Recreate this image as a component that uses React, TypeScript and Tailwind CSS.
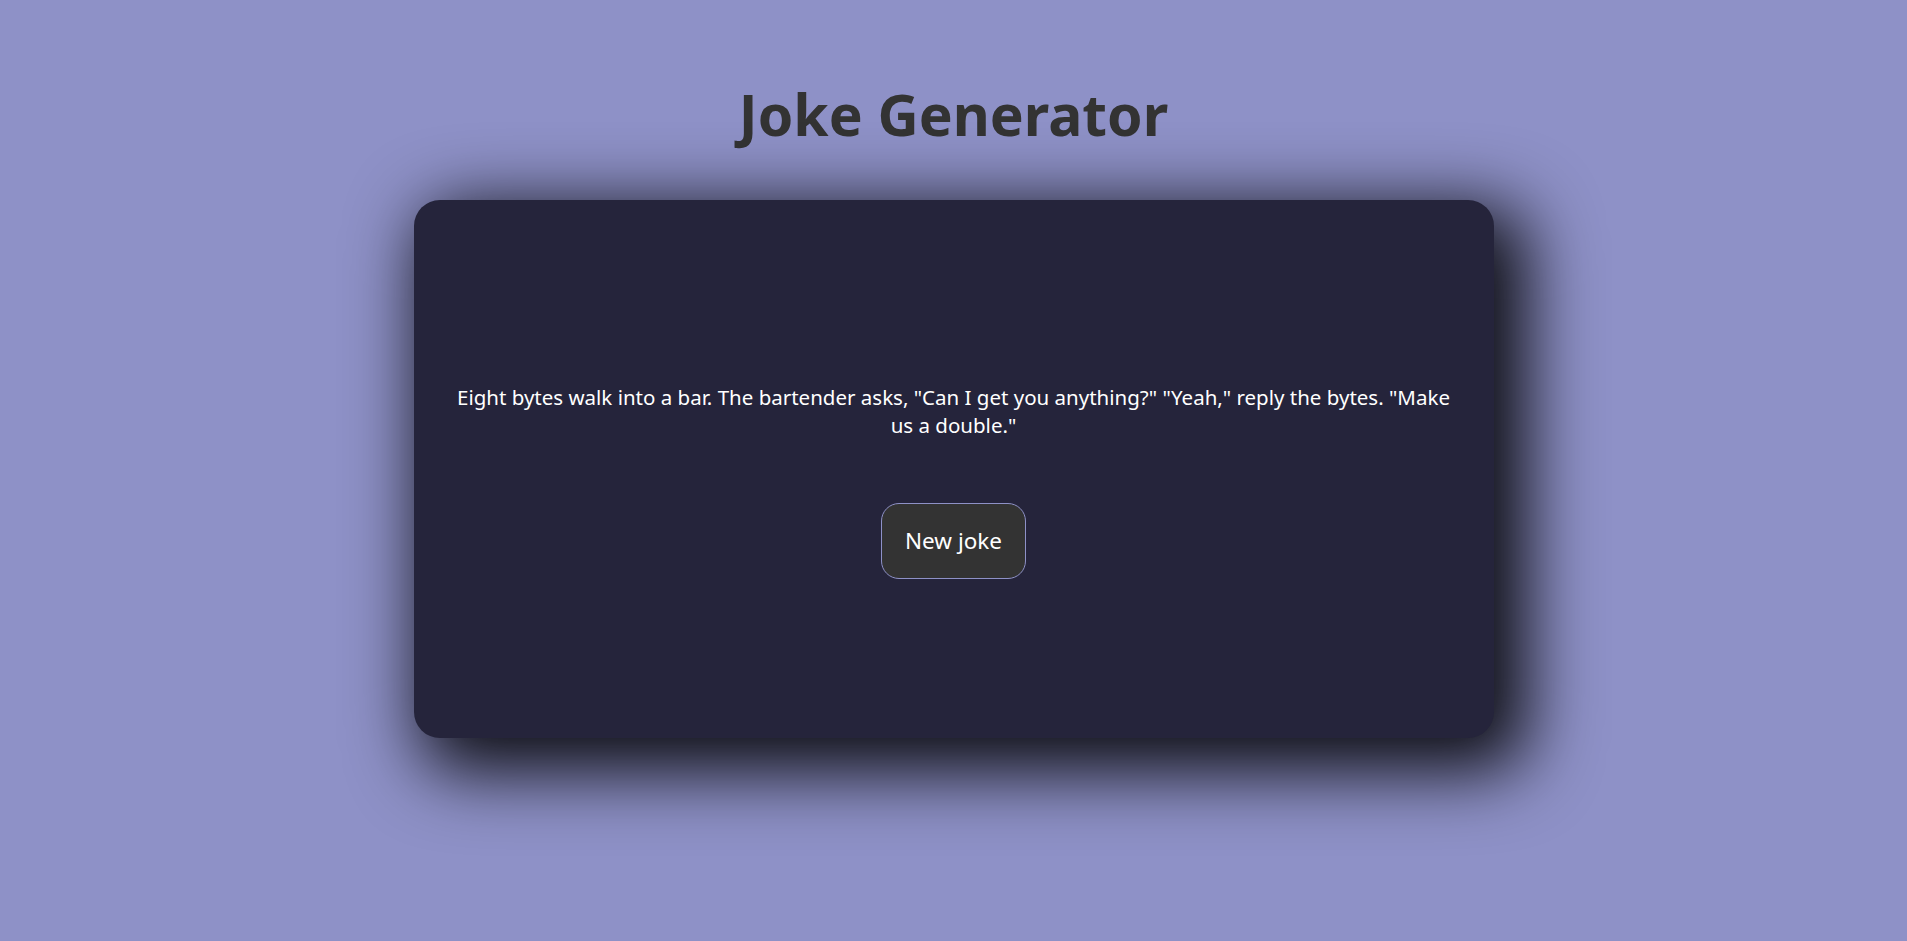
export default function App() {
  return (
    <main className="min-h-screen bg-[#8e91c7] flex flex-col items-center font-['Noto_Sans',sans-serif]">
      <h1 className="mt-[78px] text-[57px] leading-[72px] font-bold text-[#333333]">Joke Generator</h1>
      <section className="mt-[50px] w-[1080px] h-[538px] rounded-[26px] bg-[#25243b] shadow-[20px_20px_70px_14px_rgba(0,0,0,0.9)] flex flex-col items-center justify-center px-[40px] pt-[24px]">
        <p className="text-white text-[20.5px] leading-[28px] text-center">
          Eight bytes walk into a bar. The bartender asks, "Can I get you anything?" "Yeah," reply the bytes. "Make us a double."
        </p>
        <button className="mt-[64px] w-[145px] h-[76px] rounded-[18px] bg-[#333333] border border-[#8e91c7] text-white text-[22.5px]">
          New joke
        </button>
      </section>
    </main>
  );
}
